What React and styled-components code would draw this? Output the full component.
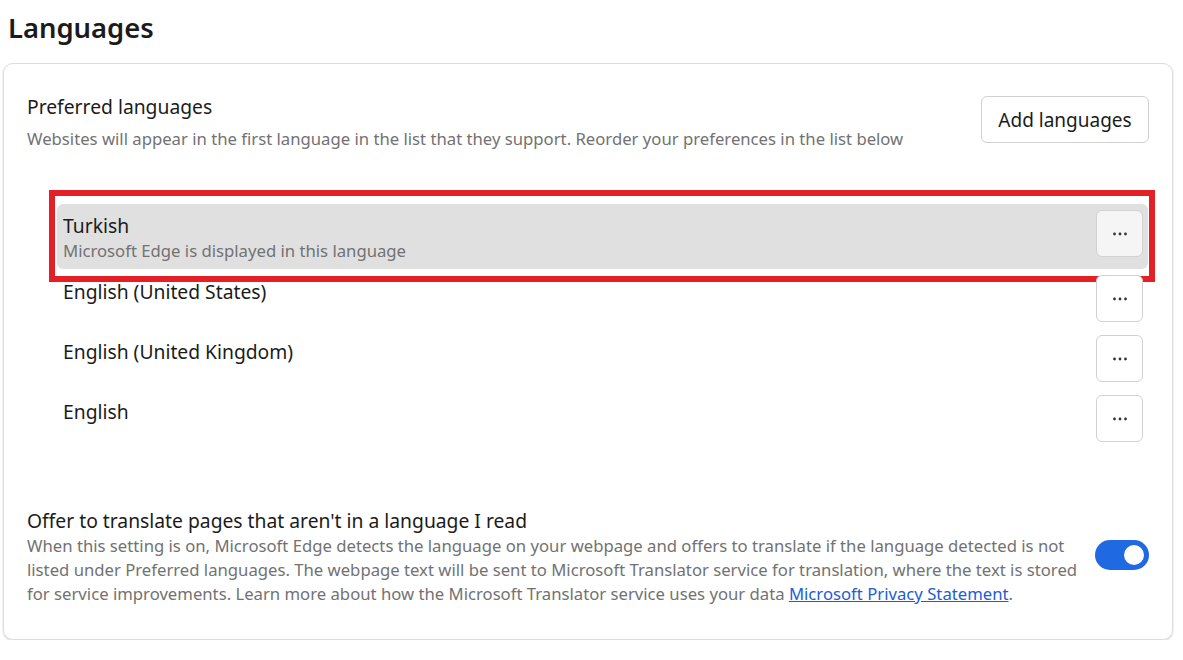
import styled, { createGlobalStyle } from "styled-components";

const GlobalStyle = createGlobalStyle`
  html, body {
    margin: 0;
    padding: 0;
    background: #ffffff;
  }
  body {
    font-family: "Noto Sans", "Open Sans", Arial, sans-serif;
    color: #1b1b1b;
  }
`;

const Page = styled.div`
  width: 1183px;
  padding: 0 10px 0 3px;
  box-sizing: border-box;
`;

const Heading = styled.h1`
  margin: 10px 0 17px 5px;
  font-size: 27.4px;
  line-height: 36px;
  font-weight: 600;
  color: #1b1b1b;
`;

const Card = styled.section`
  border: 1px solid #dcdcdc;
  border-radius: 10px;
  box-shadow: 0 1px 2px rgba(0, 0, 0, 0.18);
  padding: 30px 23px 33px 23px;
`;

const Header = styled.div`
  display: flex;
  justify-content: space-between;
  align-items: flex-start;
`;

const Title = styled.div`
  font-size: 19.3px;
  line-height: 26px;
  color: #1b1b1b;
`;

const Desc = styled.div`
  font-size: 16.7px;
  line-height: 24px;
  color: #727272;
  margin-top: ${(p) => p.$gap || 0}px;
  white-space: ${(p) => (p.$nowrap ? "nowrap" : "normal")};
`;

const AddButton = styled.button`
  margin-top: 2px;
  width: 168px;
  height: 47px;
  border: 1px solid #d1d1d1;
  border-radius: 6px;
  background: #ffffff;
  font-family: inherit;
  font-size: 19px;
  color: #1b1b1b;
`;

const List = styled.div`
  margin: 53px 1px 0 30px;
  display: flex;
  flex-direction: column;
`;

const Row = styled.div`
  position: relative;
  display: flex;
  justify-content: space-between;
  align-items: flex-start;
  min-height: 60px;
  padding: 0 5px 0 6px;
  border-radius: 6px;
  background: ${(p) => (p.$active ? "#e0e0e0" : "transparent")};
`;

const RowText = styled.div`
  padding: ${(p) => (p.$active ? "9px 0 6px" : "10px 0 5px")};
`;

const MoreButton = styled.button`
  margin-top: 6px;
  width: 47px;
  height: 47px;
  border: 1px solid #d1d1d1;
  border-radius: 6px;
  background: ${(p) => (p.$active ? "#f5f5f5" : "#ffffff")};
  display: flex;
  align-items: center;
  justify-content: center;
  padding: 0;
`;

const Highlight = styled.div`
  position: absolute;
  top: -14px;
  left: -8px;
  right: -7px;
  bottom: -13px;
  border: 6px solid #e51f26;
  pointer-events: none;
`;

const Offer = styled.div`
  margin-top: 59px;
  display: flex;
  align-items: center;
  justify-content: space-between;
  gap: 10px;
`;

const OfferText = styled.div`
  flex: 1;
  min-width: 0;
`;

const Link = styled.a`
  color: #1a5ed8;
  text-decoration: underline;
`;

const Toggle = styled.div`
  flex: none;
  width: 54px;
  height: 30px;
  border-radius: 15px;
  background: #1f69e2;
  display: flex;
  align-items: center;
  justify-content: flex-end;
  padding: 0 5px;
  box-sizing: border-box;
  margin: -4px 0 0 0;
`;

const Knob = styled.div`
  width: 20px;
  height: 20px;
  border-radius: 50%;
  background: #ffffff;
`;

function Dots() {
  return (
    <svg width="14" height="4" viewBox="0 0 14 4">
      <circle cx="1.5" cy="2" r="1.4" fill="#333" />
      <circle cx="7" cy="2" r="1.4" fill="#333" />
      <circle cx="12.5" cy="2" r="1.4" fill="#333" />
    </svg>
  );
}

const languages = [
  { name: "Turkish", note: "Microsoft Edge is displayed in this language", active: true },
  { name: "English (United States)" },
  { name: "English (United Kingdom)" },
  { name: "English" },
];

export default function App() {
  return (
    <Page>
      <GlobalStyle />
      <Heading>Languages</Heading>
      <Card>
        <Header>
          <div>
            <Title>Preferred languages</Title>
            <Desc $gap={7}>
              Websites will appear in the first language in the list that they support. Reorder your preferences in the list below
            </Desc>
          </div>
          <AddButton>Add languages</AddButton>
        </Header>

        <List>
          {languages.map((lang) => (
            <Row key={lang.name} $active={lang.active}>
              <RowText $active={lang.active}>
                <Title>{lang.name}</Title>
                {lang.note && <Desc>{lang.note}</Desc>}
              </RowText>
              <MoreButton $active={lang.active}>
                <Dots />
              </MoreButton>
              {lang.active && <Highlight />}
            </Row>
          ))}
        </List>

        <Offer>
          <OfferText>
            <Title>Offer to translate pages that aren't in a language I read</Title>
            <Desc $nowrap>
              When this setting is on, Microsoft Edge detects the language on your webpage and offers to translate if the language detected is not
              <br />
              listed under Preferred languages. The webpage text will be sent to Microsoft Translator service for translation, where the text is stored
              <br />
              for service improvements. Learn more about how the Microsoft Translator service uses your data{" "}
              <Link href="#">Microsoft Privacy Statement</Link>.
            </Desc>
          </OfferText>
          <Toggle>
            <Knob />
          </Toggle>
        </Offer>
      </Card>
    </Page>
  );
}
